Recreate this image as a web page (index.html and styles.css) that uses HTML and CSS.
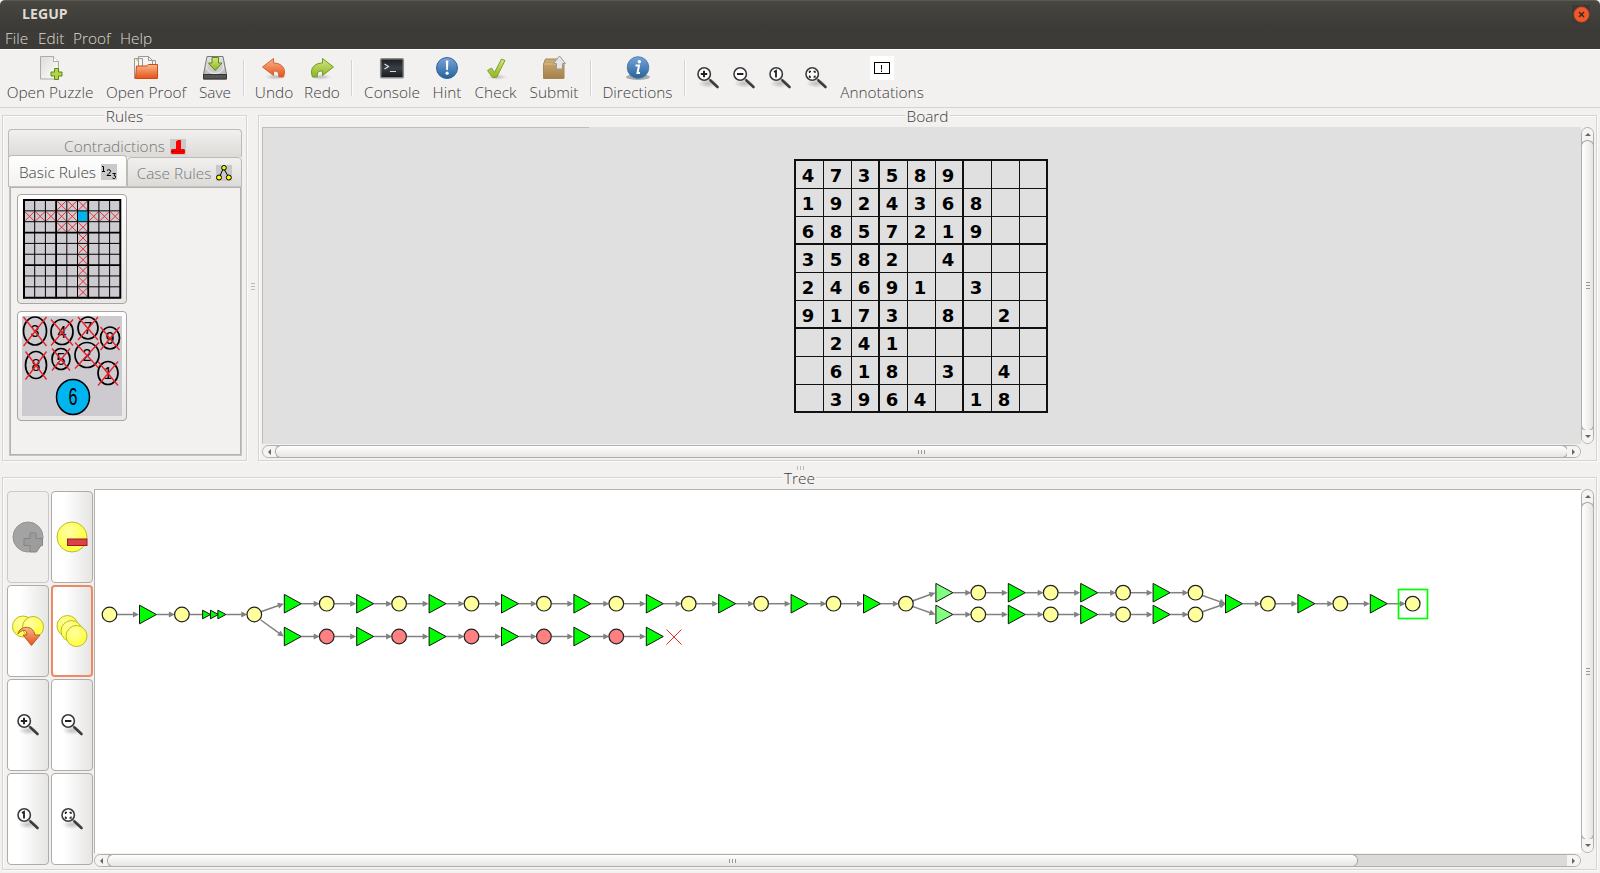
FILE: index.html
```html
<!DOCTYPE html>
<html lang="en">
<head>
<meta charset="utf-8">
<title>LEGUP</title>
<link rel="stylesheet" href="styles.css">
</head>
<body>
<svg class="defs" aria-hidden="true">
  <defs>
    <linearGradient id="blue" x1="0" y1="0" x2="0" y2="1"><stop offset="0" stop-color="#7aa3d8"/><stop offset="1" stop-color="#23649b"/></linearGradient>
    <linearGradient id="orange" x1="0" y1="0" x2="0" y2="1"><stop offset="0" stop-color="#f3b98b"/><stop offset="1" stop-color="#e8501a"/></linearGradient>
    <linearGradient id="green" x1="0" y1="0" x2="0" y2="1"><stop offset="0" stop-color="#d3e67c"/><stop offset="1" stop-color="#8fb524"/></linearGradient>
    <linearGradient id="paper" x1="0" y1="0" x2="1" y2="1"><stop offset="0" stop-color="#dcdcda"/><stop offset="1" stop-color="#fff"/></linearGradient>
    <linearGradient id="metal" x1="0" y1="0" x2="0" y2="1"><stop offset="0" stop-color="#e4e4e4"/><stop offset="1" stop-color="#b0b0b0"/></linearGradient>
    <linearGradient id="box" x1="0" y1="0" x2="0" y2="1"><stop offset="0" stop-color="#ceac75"/><stop offset="1" stop-color="#a5814b"/></linearGradient>
    <linearGradient id="term" x1="0" y1="0" x2="0" y2="1"><stop offset="0" stop-color="#1a1d22"/><stop offset=".5" stop-color="#3a3f46"/><stop offset="1" stop-color="#15171a"/></linearGradient>
    <radialGradient id="yellow" cx=".4" cy=".35"><stop offset="0" stop-color="#ffffa8"/><stop offset="1" stop-color="#ffff4d"/></radialGradient>
    <radialGradient id="shade"><stop offset="0" stop-color="#000" stop-opacity=".22"/><stop offset="1" stop-color="#000" stop-opacity="0"/></radialGradient>
    <symbol id="lens" viewBox="0 0 24 24">
      <ellipse cx="12" cy="17.500" rx="10" ry="4.500" fill="url(#shade)"/>
      <path d="M13 13l3 3" stroke="#999" stroke-width="2"/>
      <path d="M14.500 14.500l7 6.500" stroke="#3c3c3c" stroke-width="2.600" stroke-linecap="round"/>
      <circle cx="8.200" cy="8" r="6.200" fill="#fff" stroke="#3c3c3c" stroke-width="1.600"/>
    </symbol>
    <symbol id="zin" viewBox="0 0 24 24"><use href="#lens"/><path d="M8 4.800v6.400M4.800 8h6.400" stroke="#222" stroke-width="2"/></symbol>
    <symbol id="zout" viewBox="0 0 24 24"><use href="#lens"/><path d="M5 8h6.400" stroke="#222" stroke-width="2"/></symbol>
    <symbol id="zone" viewBox="0 0 24 24"><use href="#lens"/><path d="M6 6l2-1.200V11.500" fill="none" stroke="#222" stroke-width="1.800"/></symbol>
    <symbol id="zfit" viewBox="0 0 24 24"><use href="#lens"/><path d="M5.500 7V5.500H7M9.500 5.500h1.500V7M11 9.500V11H9.500M7 11H5.500V9.500" fill="none" stroke="#222" stroke-width="1.300"/></symbol>
  </defs>
</svg>

<header class="titlebar">
  <div class="caption"><span class="app-name">LEGUP</span>
    <svg class="close" width="18" height="20" viewBox="0 0 18 20"><rect width="18" height="19" fill="#3b3a36"/><circle cx="9.500" cy="9.500" r="7.500" fill="#f0592c" stroke="#d94a1f"/><path d="M7 7l5 5M12 7l-5 5" stroke="#3b2a22" stroke-width="1.500"/></svg>
  </div>
  <nav class="menu"><span class="m-file">File</span><span class="m-edit">Edit</span><span class="m-proof">Proof</span><span class="m-help">Help</span></nav>
</header>

<div class="toolbar">
  <div class="tool w86"><svg width="24" height="24" viewBox="0 0 24 24"><path d="M2.500.500h13l5 5v17.500h-18z" fill="url(#paper)" stroke="#aaa"/><path d="M15.500.500v5h5" fill="#fff" stroke="#aaa"/><path d="M16.500 12.500h4v3.500h3.500v4h-3.500v3.500h-4v-3.500H13v-4h3.500z" fill="#b4d24a" stroke="#5b8a14"/></svg><span>Open Puzzle</span></div>
  <div class="tool w80"><svg width="24" height="24" viewBox="0 0 24 24"><path d="M.500 2.500h8v20h-8zM4.500.500h10l4 4V12h-14z" fill="#f4f4f2" stroke="#999"/><path d="M14.500.500v4h7V12" fill="none" stroke="#999"/><path d="M2 4h3" stroke="#e8a030"/><path d="M1.500 22.500l1-12.500h10l2-1.500h9v14z" fill="url(#orange)" stroke="#d2480f"/></svg><span>Open Proof</span></div>
  <div class="tool w30"><svg width="24" height="24" viewBox="0 0 24 24"><path d="M4 .500h16l3.500 18v4.500H.500v-4.500z" fill="url(#metal)" stroke="#777"/><path d="M.500 18.500h23V23H.500z" fill="#555" stroke="#333"/><ellipse cx="12" cy="11" rx="8.500" ry="6.500" fill="#ccc" stroke="#eee"/><path d="M9 1.500h6.500v5.500h3.500l-6.800 7.500L5.500 7H9z" fill="url(#green)" stroke="#5b8a14"/></svg><span>Save</span></div>
  <i class="sep"></i>
  <div class="tool w36"><svg width="24" height="24" viewBox="0 0 24 24"><ellipse cx="13" cy="21" rx="10" ry="3" fill="url(#shade)"/><path d="M.500 11L11.500 2.500v4.500c7 0 11 4 11 9 0 2-.5 3.500-1 5h-5c1-5-1-6-5-6v4.500z" fill="url(#orange)" stroke="#d2633a"/></svg><span>Undo</span></div>
  <div class="tool w34"><svg width="24" height="24" viewBox="0 0 24 24"><ellipse cx="11" cy="21" rx="10" ry="3" fill="url(#shade)"/><path d="M23.500 11L12.500 2.500v4.500c-7 0-11 4-11 9 0 2 .5 3.500 1 5h5c-1-5 1-6 5-6v4.500z" fill="url(#green)" stroke="#6f9a28"/></svg><span>Redo</span></div>
  <i class="sep"></i>
  <div class="tool w56"><svg width="24" height="24" viewBox="0 0 24 24"><rect x=".7" y="2.700" width="22.600" height="19" rx="1" fill="url(#term)" stroke="#8c8c8c" stroke-width="1.500"/><path d="M4.500 8l4 2.500-4 2.500" fill="none" stroke="#ddd" stroke-width="1.200"/><path d="M10 15.500h6" stroke="#ddd"/></svg><span>Console</span></div>
  <div class="tool w28"><svg width="24" height="24" viewBox="0 0 24 24"><circle cx="12" cy="12" r="10.500" fill="url(#blue)" stroke="#2b659c"/><path d="M10.800 4.500h2.600l-.5 9.500h-1.600z" fill="#fff"/><circle cx="12.100" cy="17.200" r="1.600" fill="#fff"/></svg><span>Hint</span></div>
  <div class="tool w43"><svg width="24" height="24" viewBox="0 0 24 24"><ellipse cx="13" cy="21" rx="10" ry="3" fill="url(#shade)"/><path d="M3.500 14.500l4-2.500 3 4.500L17.500 3l3.500 1.500-8.500 17h-4z" fill="url(#green)" stroke="#7fa428"/></svg><span>Check</span></div>
  <div class="tool w48"><svg width="24" height="24" viewBox="0 0 24 24"><path d="M1.500 8l2-5h16l2.500 5v14.500H1.500z" fill="url(#box)" stroke="#a98752"/><path d="M1.500 8H22" stroke="#d9bd90"/><path d="M17.500 0l6 7.500h-3v5.500h-6V7.500h-3z" fill="#e6e6e6" stroke="#999"/></svg><span>Submit</span></div>
  <i class="sep"></i>
  <div class="tool w71"><svg width="24" height="24" viewBox="0 0 24 24"><ellipse cx="12" cy="21" rx="12" ry="3" fill="#aaa"/><circle cx="12" cy="11.500" r="10.800" fill="url(#blue)" stroke="#3a74ab" stroke-width=".8"/><circle cx="13.300" cy="5.700" r="1.700" fill="#fff"/><path d="M9.500 9.500h3.500l-1.500 7.500H14" fill="none" stroke="#fff" stroke-width="2"/></svg><span>Directions</span></div>
  <i class="sep"></i>
  <div class="zooms"><svg width="24" height="24"><use href="#zin"/></svg><svg width="24" height="24"><use href="#zout"/></svg><svg width="24" height="24"><use href="#zone"/></svg><svg width="24" height="24"><use href="#zfit"/></svg></div>
  <div class="tool w84"><svg width="24" height="24" viewBox="0 0 24 24"><rect width="24" height="24" fill="#fff"/><rect x="4.500" y="6.500" width="15" height="11" fill="none" stroke="#000"/><path d="M11.500 9v4.500M11.500 14.500v1.500" stroke="#000"/></svg><span>Annotations</span></div>
</div>

<main class="workspace">
  <div class="upper">
    <section class="group rules">
      <h2 class="legend">Rules</h2>
      <div class="tabs">
        <div class="tab back"><span>Contradictions</span><svg width="16" height="16"><rect width="16" height="16" fill="#c9c9c9"/><path d="M6 2.500L8 1h3v9h3l1 1v3l-1 1H2l-1-1v-3l1-1h4z" fill="#f00"/><path d="M1 12.500h13" stroke="#b00"/></svg></div>
        <div class="tabrow">
          <div class="tab active"><span>Basic Rules</span><svg width="16" height="16"><rect width="16" height="16" fill="#c9c9c9"/><path d="M1 2.500h1.500V7M1 7.500h3M6 6.500q1.500-1.500 3-.5t-.5 3L6 11.500h4M11.500 9.500h3l-1.500 2q2 0 1.500 2t-3 .5" fill="none" stroke="#000"/></svg></div>
          <div class="tab other"><span>Case Rules</span><svg width="16" height="16"><rect width="16" height="16" fill="#c9c9c9"/><path d="M7 4L4 11M8 4l4 7" stroke="#000"/><circle cx="8" cy="2.800" r="2.300" fill="#ff0" stroke="#000"/><circle cx="3" cy="12.500" r="2.500" fill="#ff0" stroke="#000"/><circle cx="12.800" cy="12.500" r="2.500" fill="#ff0" stroke="#000"/></svg></div>
        </div>
        <div class="tabbody">
          <div class="rule"><svg id="rule-grid" width="100" height="100"></svg></div>
          <div class="rule"><svg id="rule-last" width="100" height="100"></svg></div>
        </div>
      </div>
    </section>
    <div class="vgrip"><i></i><i></i><i></i></div>
    <section class="group board">
      <h2 class="legend">Board</h2>
      <div class="scroller">
        <div class="canvas board-canvas"><div class="sudoku" id="sudoku"></div></div>
        <div class="vbar"><i class="arrow up"></i><b class="thumb v"><s></s></b><i class="arrow down"></i></div>
        <div class="hbar"><i class="arrow left"></i><b class="thumb"><s></s></b><i class="arrow right"></i></div>
      </div>
    </section>
  </div>
  <div class="hgrip"><i></i><i></i><i></i></div>
  <section class="group tree">
    <h2 class="legend">Tree</h2>
    <div class="tree-tools">
      <div class="tbtn off"><svg width="32" height="32"><circle cx="16" cy="16" r="15" fill="#a3a3a3" stroke="#929292"/><path d="M18 12h6v5.500h6.500v7l-2 .5-4 6H18v-6.500h-6v-7h6z" fill="#9c9c9c" stroke="#858585"/></svg></div>
      <div class="tbtn"><svg width="32" height="32"><circle cx="16" cy="16" r="15" fill="url(#yellow)" stroke="#b9b932"/><rect x="11.500" y="18" width="19.500" height="6.500" fill="#d8434a" stroke="#a3141c"/></svg></div>
      <div class="tbtn"><svg width="32" height="32"><circle cx="11" cy="11.500" r="10.500" fill="url(#yellow)" stroke="#b9b932"/><circle cx="21" cy="12" r="10.500" fill="url(#yellow)" stroke="#b9b932"/><path d="M6 19c1-8 15-10 17 1h5l-8.500 10.500L11 20h4c0-6-5-6-9-1z" fill="url(#orange)" stroke="#bd5a22"/></svg></div>
      <div class="tbtn hot"><svg width="32" height="32"><circle cx="11.500" cy="11" r="10.500" fill="url(#yellow)" stroke="#b9b932"/><circle cx="15.500" cy="16" r="10.500" fill="url(#yellow)" stroke="#b9b932"/><circle cx="20.500" cy="21" r="10.500" fill="url(#yellow)" stroke="#b9b932"/></svg></div>
      <div class="tbtn"><svg width="24" height="24"><use href="#zin"/></svg></div>
      <div class="tbtn"><svg width="24" height="24"><use href="#zout"/></svg></div>
      <div class="tbtn"><svg width="24" height="24"><use href="#zone"/></svg></div>
      <div class="tbtn"><svg width="24" height="24"><use href="#zfit"/></svg></div>
    </div>
    <div class="scroller">
      <div class="canvas tree-canvas"><svg id="tree" width="1485" height="300" viewBox="95 490 1485 300"></svg></div>
      <div class="vbar"><i class="arrow up"></i><b class="thumb v"><s></s></b><i class="arrow down"></i></div>
      <div class="hbar"><i class="arrow left"></i><b class="thumb part"><s></s></b><i class="arrow right"></i></div>
    </div>
  </section>
</main>
<script src="script.js"></script>
</body>
</html>
```
FILE: styles.css
```css
* { box-sizing: border-box; }
html { background: #000; }
body { margin: 0; width: 1600px; height: 873px; overflow: hidden; display: flex; flex-direction: column; background: #f2f1f0; color: #3f3f3f; font: 300 15.4px/20px "Open Sans", "Noto Sans", sans-serif; }
.defs { position: absolute; width: 0; height: 0; }
svg { display: block; flex: none; }
span { white-space: nowrap; }

.titlebar { height: 49px; flex: none; background: linear-gradient(#47463f 0, #3c3b37 26px); border-top: 1px solid #5a5953; color: #dfdbd2; border-radius: 5px 5px 0 0; }
.caption { display: flex; justify-content: space-between; height: 26px; padding: 3px 10px 0 22px; }
.app-name { font-weight: 700; font-size: 14px; letter-spacing: 0.1px; }
.close { margin-top: 1px; }
.menu { display: flex; padding: 2px 0 0 5px; height: 22px; }
.m-file { width: 33px; }
.m-edit { width: 35px; }
.m-proof { width: 47px; }

.toolbar { height: 59px; flex: none; border-top: 1px solid #fff; border-bottom: 1px solid #d5d3d0; display: flex; gap: 13px; padding: 6px 0 0 7px; }
.tool { display: flex; flex-direction: column; align-items: center; gap: 3px; flex: none; }
.tool svg { overflow: visible; }
.w86 { width: 86px; }
.w80 { width: 80px; }
.w30 { width: 32px; }
.w36 { width: 36px; }
.w34 { width: 34px; }
.w56 { width: 56px; }
.w28 { width: 28px; }
.w43 { width: 43px; }
.w48 { width: 48px; }
.w71 { width: 69px; }
.w84 { width: 84px; }
.sep { width: 1px; height: 36px; margin: 4px -1px 0 -1px; background: #d5d3d0; box-shadow: 1px 0 #fbfbfa; flex: none; }
.zooms { display: flex; gap: 12px; padding-top: 10px; width: 131px; flex: none; margin-left: -1px; }

.workspace { flex: 1; min-height: 0; display: flex; flex-direction: column; padding: 7px 3px 3px 2px; }
.upper { height: 346px; flex: none; display: flex; }
.group { position: relative; border: 1px solid #d6d4d1; box-shadow: 1px 1px #fbfbfa, inset 1px 1px #fbfbfa; }
.legend { position: absolute; top: -8px; left: 50%; transform: translateX(-50%); margin: 0; padding: 0 2px; background: #f2f1f0; font: inherit; line-height: 18px; color: #3c3c3c; }
.rules { width: 245px; padding: 13px 4px 4px 5px; }
.tabs { height: 327px; display: flex; flex-direction: column; }
.tab { display: flex; align-items: center; justify-content: center; gap: 5px; border: 1px solid #bdbab6; border-bottom: 0; border-radius: 4px 4px 0 0; background: linear-gradient(#f1f0ef, #dddbd8); color: #777; }
.tab span { padding-top: 1px; line-height: 20px; }
.tab.back { height: 28px; padding-top: 6px; }
.tabrow { display: flex; height: 32px; margin-top: -2px; align-items: flex-end; }
.tab.active { width: 119px; height: 32px; background: linear-gradient(#fff, #f2f1f0); color: #3f3f3f; padding: 1px 0 0 1px; }
.tab.other { flex: 1; height: 30px; border-bottom: 1px solid #bdbab6; padding-top: 2px; }
.tabbody { flex: 1; margin: -1px 0 0 1px; border: 1px solid #c6c3c0; outline: 1px solid #b5b2ae; outline-offset: -2px; padding: 7px; display: flex; flex-direction: column; gap: 7px; }
.rule { width: 110px; height: 110px; border: 1px solid #a8a5a2; border-radius: 4px; background: linear-gradient(#fff, #e8e7e5); padding: 4px; flex: none; }

.vgrip { width: 11px; display: flex; flex-direction: column; align-items: center; justify-content: center; gap: 2px; padding-bottom: 4px; }
.vgrip i { width: 4px; height: 1px; background: #bbb; }
.hgrip { height: 16px; flex: none; display: flex; align-items: center; justify-content: center; gap: 2px; padding: 0 0 3px 2px; }
.hgrip i { width: 1px; height: 4px; background: #bbb; }
.board { flex: 1; padding: 11px 1px 2px 3px; display: flex; }
.scroller { flex: 1; display: grid; grid-template-columns: 1fr 14px; grid-template-rows: 1fr 14px; }
.canvas { overflow: hidden; min-height: 0; }
.board-canvas { background: #e0e0e0 linear-gradient(#bfbcb9, #bfbcb9) 0 0 / 326px 1px no-repeat; border-left: 1px solid #bfbcb9; display: flex; padding: 32px 0 0 531px; }
.sudoku { width: 254px; height: 254px; display: grid; grid-template-columns: repeat(9, 28px); grid-template-rows: repeat(9, 28px); border: 2px solid #111; border-width: 2px 0 0 2px; flex: none; }
.cell { border-right: 1px solid #111; border-bottom: 1px solid #111; font: 700 18px/30px "DejaVu Sans", sans-serif; color: #000; text-align: center; padding-right: 3px; }
.cell.r { border-right: 2px solid #111; padding-right: 2px; }
.cell.b { border-bottom: 2px solid #111; }

.vbar, .hbar { background: #dcdad8; border: 1px solid #b2afab; border-radius: 7px; display: flex; overflow: hidden; }
.vbar { flex-direction: column; width: 13px; }
.hbar { height: 13px; margin-top: 1px; }
.hbar .arrow { width: 13px; height: 100%; }
.vbar .arrow { height: 13px; width: 100%; }
.arrow { background: #f5f4f3; display: flex; align-items: center; justify-content: center; flex: none; }
.arrow::before { content: ""; border: 3px solid transparent; }
.up::before { border-bottom-color: #666; border-top: 0; }
.down::before { border-top-color: #666; border-bottom: 0; }
.left::before { border-right-color: #666; border-left: 0; }
.right::before { border-left-color: #666; border-right: 0; }
.thumb { flex: 1; display: flex; align-items: center; justify-content: center; border-radius: 7px; background: linear-gradient(#fff, #e6e5e3); box-shadow: 0 0 0 1px #a09d99; }
.thumb.v { background: linear-gradient(90deg, #fff, #e6e5e3); }
.thumb.part { flex: 0 0 1249px; }
.hbar .right { margin-left: auto; }
.thumb s { width: 7px; height: 4px; background: repeating-linear-gradient(90deg, #999 0 1px, transparent 1px 3px); }
.thumb.v s { width: 4px; height: 7px; background: repeating-linear-gradient(#999 0 1px, transparent 1px 3px); }

.tree { flex: 1; min-height: 0; padding: 11px 1px 2px 4px; display: flex; }
.tree-tools { width: 87px; display: grid; grid-template-columns: 42px 42px; grid-auto-rows: 92px; gap: 2px; padding-top: 2px; height: 376px; }
.tbtn { border: 1px solid #aeaba8; border-radius: 4px; background: linear-gradient(90deg, #fff 30%, #e6e5e4); display: flex; align-items: center; justify-content: center; }
.tbtn.off { border-color: #cbc9c6; background: #f0efee; }
.tbtn.hot { border: 2px solid #ec8a66; }
.tree-canvas { background: #fff; border-left: 1px solid #b5b2ae; border-top: 1px solid #b5b2ae; }

.num { font: 400 16px "Liberation Sans", sans-serif; text-anchor: middle; fill: #000; }
.num.big { font-size: 24px; }
```
FILE: script.js
```js
const rows = ["473589   ", "1924368  ", "6857219  ", "3582 4   ", "24691 3  ", "9173 8 2 ", " 241     ", " 618 3 4 ", " 3964 18 "];
document.getElementById("sudoku").innerHTML = rows.map((row, y) =>
  [...row].map((d, x) => `<div class="cell${x % 3 === 2 ? " r" : ""}${y % 3 === 2 ? " b" : ""}">${d.trim()}</div>`).join("")).join("");

// Proof tree
const P = 72.4, X0 = 109.5;
let lines = "", nodes = "";
const node = (x, y, fill = "#ffff9b") => { nodes += `<circle cx="${x}" cy="${y}" r="7.3" fill="${fill}" stroke="#222" stroke-width="1.2"/>`; };
const tri = (x, y, fill = "#00ff00", w = 17, h = 9.3) => { nodes += `<path d="M${x} ${y - h}L${x + w} ${y}L${x} ${y + h}z" fill="${fill}" stroke="#111" stroke-width="1"/>`; };
const arrow = (x1, y1, x2, y2) => {
  const a = Math.atan2(y2 - y1, x2 - x1) * 180 / Math.PI;
  lines += `<path d="M${x1} ${y1}L${x2 - 3} ${y2 - (y2 - y1) * 3 / (x2 - x1)}" stroke="#808080" stroke-width="1.5"/>` +
    `<path d="M0 0L-6 -3V3z" transform="translate(${x2} ${y2}) rotate(${a})" fill="#808080"/>`;
};
const step = (x, y, circle, fill) => {
  arrow(x + 7, y, x + 29.5, y); tri(x + 30, y, fill);
  arrow(x + 47, y, x + P - 7, y); node(x + P, y, circle);
};
const M = 614.5, U = 603.7, L = 636.5;
node(X0, M); step(X0, M);
const x1 = X0 + P;
lines += `<path d="M${x1 + 7} ${M}H${x1 + 22}" stroke="#808080" stroke-width="1.5"/>`;
[20.7, 28.6, 36].forEach(d => tri(x1 + d, M, "#00ff00", 8, 4.3));
arrow(x1 + 44, M, x1 + P - 7, M);
const x2 = X0 + 2 * P; node(x2, M);
const branch = (x, y, ty, circle, fill) => {
  arrow(x + 6.5, y + (ty - y) * .25, x + 29.5, ty); tri(x + 30, ty, fill);
  arrow(x + 47, ty, x + P - 7, ty); node(x + P, ty, circle);
};
branch(x2, M, U);
for (let i = 3; i < 11; i++) step(X0 + i * P, U);
branch(x2, M, L, "#ff8080");
for (let i = 3; i < 7; i++) step(X0 + i * P, L, "#ff8080");
const xe = X0 + 7 * P;
arrow(xe + 7, L, xe + 29.5, L); tri(xe + 30, L);
nodes += `<path d="M666.500 629.500l15 15M681.500 629.500l-15 15" stroke="#ff2020" stroke-width="1"/>`;
const x3 = X0 + 11 * P;
for (const y of [592.7, 614.5]) {
  branch(x3, U, y, "#ffff9b", "#80ff80");
  for (let i = 12; i < 15; i++) step(X0 + i * P, y);
  arrow(X0 + 15 * P + 7, y + (U - y) * .25, X0 + 15 * P + 30, U);
}
const x4 = X0 + 15 * P;
tri(x4 + 30, U); arrow(x4 + 47, U, x4 + P - 7, U); node(x4 + P, U);
step(X0 + 16 * P, U); step(X0 + 17 * P, U);
nodes += `<rect x="1398.500" y="589.500" width="29" height="29" fill="none" stroke="#00ff00" stroke-width="1.700"/>`;
document.getElementById("tree").innerHTML = lines + nodes;

// Rule illustration: eliminated row, column and block
let g = `<rect x="1.500" y="1.500" width="97" height="98" fill="#cdcbd0"/>`;
const marks = [[3, 0], [4, 0], [5, 0], [3, 2], [4, 2], [5, 2]];
for (let i = 0; i < 9; i++) {
  if (i !== 5) marks.push([i, 1]);
  if (i > 2) marks.push([5, i]);
}
g += `<rect x="55" y="12" width="10" height="10" fill="#00b4f0"/>`;
marks.forEach(([x, y]) => {
  const a = 2 + x * 10.7, b = 1 + y * 10.85;
  g += `<path d="M${a + 1} ${b + 1}l9 9m0 -9l-9 9" stroke="#ed1c24" stroke-width=".9"/>`;
});
for (let i = 0; i <= 9; i++) {
  const w = i % 9 === 0 ? 2 : i % 3 === 0 ? 1.8 : 1;
  g += `<path d="M${2 + i * 10.7} 0V99.500M1 ${1 + i * 10.85}H99" stroke="#000" stroke-width="${w}"/>`;
}
document.getElementById("rule-grid").innerHTML = g;

// Rule illustration: last remaining number
let n = `<rect width="100" height="100" fill="#cdcbd0"/>`;
[[3, 13, 15, 11.5, 14], [4, 40, 16, 11, 12.5], [7, 66, 12, 10, 11], [9, 88, 22, 9.5, 11], [8, 14, 49, 10.5, 13.5], [5, 39, 43, 9, 10.5], [2, 65, 39, 12, 12.5], [1, 86, 57, 10, 11.5]].forEach(([d, x, y, rx, ry]) => {
  n += `<ellipse cx="${x}" cy="${y}" rx="${rx}" ry="${ry}" fill="none" stroke="#000" stroke-width="1.700"/><text x="${x}" y="${y + 6}" class="num">${d}</text>` +
    `<path d="M${x - rx} ${y - ry}L${x + rx} ${y + ry + 1}M${x + rx} ${y - ry}L${x - rx} ${y + ry + 1}" stroke="#ed1c24" stroke-width="1.300"/>`;
});
n += `<ellipse cx="51" cy="81" rx="16.500" ry="17.500" fill="#00b4f0" stroke="#000" stroke-width="1.500"/><text x="51" y="89" class="num big" textLength="9" lengthAdjust="spacingAndGlyphs">6</text>`;
document.getElementById("rule-last").innerHTML = n;
```
